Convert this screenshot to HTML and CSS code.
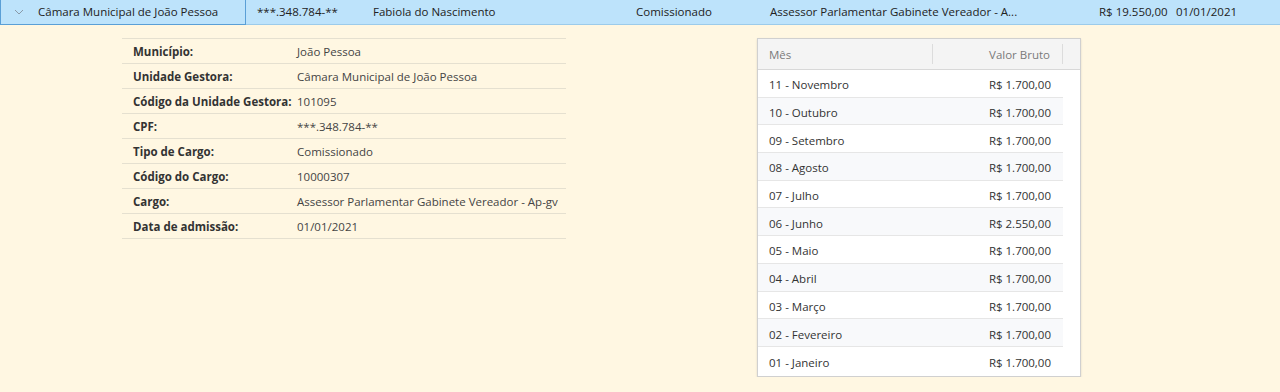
FILE: index.html
```html
<!DOCTYPE html>
<html lang="pt-BR">
<head>
<meta charset="utf-8">
<link rel="stylesheet" href="styles.css">
</head>
<body>
<div class="row">
  <div class="cell c-first">
    <svg class="chev" width="10" height="6" viewBox="0 0 10 6"><path d="M1 1 L5 5 L9 1" fill="none" stroke="#8a9aa8" stroke-width="1"/></svg>
    <span>Câmara Municipal de João Pessoa</span>
  </div>
  <div class="cell c-cpf">***.348.784-**</div>
  <div class="cell c-nome">Fabiola do Nascimento</div>
  <div class="cell c-tipo">Comissionado</div>
  <div class="cell c-cargo">Assessor Parlamentar Gabinete Vereador - A...</div>
  <div class="cell c-valor">R$ 19.550,00</div>
  <div class="cell c-data">01/01/2021</div>
</div>
<div class="detail">
  <table class="info">
    <tr><th>Município:</th><td>João Pessoa</td></tr>
    <tr><th>Unidade Gestora:</th><td>Câmara Municipal de João Pessoa</td></tr>
    <tr><th>Código da Unidade Gestora:</th><td>101095</td></tr>
    <tr><th>CPF:</th><td>***.348.784-**</td></tr>
    <tr><th>Tipo de Cargo:</th><td>Comissionado</td></tr>
    <tr><th>Código do Cargo:</th><td>10000307</td></tr>
    <tr><th>Cargo:</th><td>Assessor Parlamentar Gabinete Vereador - Ap-gv</td></tr>
    <tr><th>Data de admissão:</th><td>01/01/2021</td></tr>
  </table>
  <div class="grid">
    <div class="ghead">
      <div class="gh gh-mes">Mês</div>
      <div class="gh gh-val">Valor Bruto</div>
    </div>
    <div class="gbody">
      <div class="gr"><span>11 - Novembro</span><span>R$ 1.700,00</span></div>
      <div class="gr"><span>10 - Outubro</span><span>R$ 1.700,00</span></div>
      <div class="gr"><span>09 - Setembro</span><span>R$ 1.700,00</span></div>
      <div class="gr"><span>08 - Agosto</span><span>R$ 1.700,00</span></div>
      <div class="gr"><span>07 - Julho</span><span>R$ 1.700,00</span></div>
      <div class="gr"><span>06 - Junho</span><span>R$ 2.550,00</span></div>
      <div class="gr"><span>05 - Maio</span><span>R$ 1.700,00</span></div>
      <div class="gr"><span>04 - Abril</span><span>R$ 1.700,00</span></div>
      <div class="gr"><span>03 - Março</span><span>R$ 1.700,00</span></div>
      <div class="gr"><span>02 - Fevereiro</span><span>R$ 1.700,00</span></div>
      <div class="gr"><span>01 - Janeiro</span><span>R$ 1.700,00</span></div>
    </div>
  </div>
</div>
</body>
</html>
```
FILE: styles.css
```css
html, body {
  margin: 0;
  padding: 0;
  background: #fff7e2;
  font-family: "Open Sans", "Noto Sans", sans-serif;
  font-size: 11.5px;
  color: #333;
}
.row {
  display: flex;
  background: #bde3fb;
  border-bottom: 1px solid #9ccbea;
  box-sizing: border-box;
  height: 25px;
}
.cell {
  display: flex;
  align-items: center;
  white-space: nowrap;
  color: #222;
  padding-bottom: 1px;
  box-sizing: border-box;
}
.c-first {
  width: 246px;
  border: 1px solid #5a9fd6;
  border-top: none;
  height: 25px;
  margin-bottom: -1px;
  padding-left: 13px;
}
.chev { margin-right: 14px; }
.c-cpf { width: 127px; padding-left: 11px; }
.c-nome { width: 263px; }
.c-tipo { width: 134px; }
.c-cargo { width: 329px; }
.c-valor { width: 77px; }
.detail {
  display: flex;
  align-items: flex-start;
  padding-top: 13px;
  padding-left: 122px;
}
.info {
  width: 444px;
  border-collapse: collapse;
  border-top: 1px solid #e5e0d0;
}
.info th, .info td {
  height: 24px;
  padding: 0;
  border-bottom: 1px solid #e5e0d0;
  text-align: left;
  white-space: nowrap;
  vertical-align: middle;
}
.info th {
  width: 164px;
  padding-left: 11px;
  font-weight: 700;
  color: #333;
}
.info td { color: #444; }
.grid {
  margin-left: 191px;
  width: 322px;
  background: #fff;
  border: 1px solid #d0d0d0;
  box-shadow: 0 1px 2px rgba(0,0,0,0.12);
  padding-bottom: 1px;
}
.ghead {
  display: flex;
  height: 30px;
  background: #f4f4f4;
  border-bottom: 1px solid #d8d8d8;
  align-items: center;
  color: #7a7a7a;
}
.gh { height: 20px; display: flex; align-items: center; box-sizing: border-box; border-right: 1px solid #dcdcdc; }
.gh-mes { width: 175px; padding-left: 11px; }
.gh-val { width: 130px; justify-content: flex-end; padding-right: 12px; }
.gbody { width: 305px; }
.gr {
  display: flex;
  justify-content: space-between;
  align-items: center;
  height: 27.7px;
  box-sizing: border-box;
  padding: 3px 12px 0 11px;
  border-bottom: 1px solid #e6e6e6;
  color: #333;
}
.gr:nth-child(even) { background: #f8f9fb; }
.gr:last-child { border-bottom: none; }
```
